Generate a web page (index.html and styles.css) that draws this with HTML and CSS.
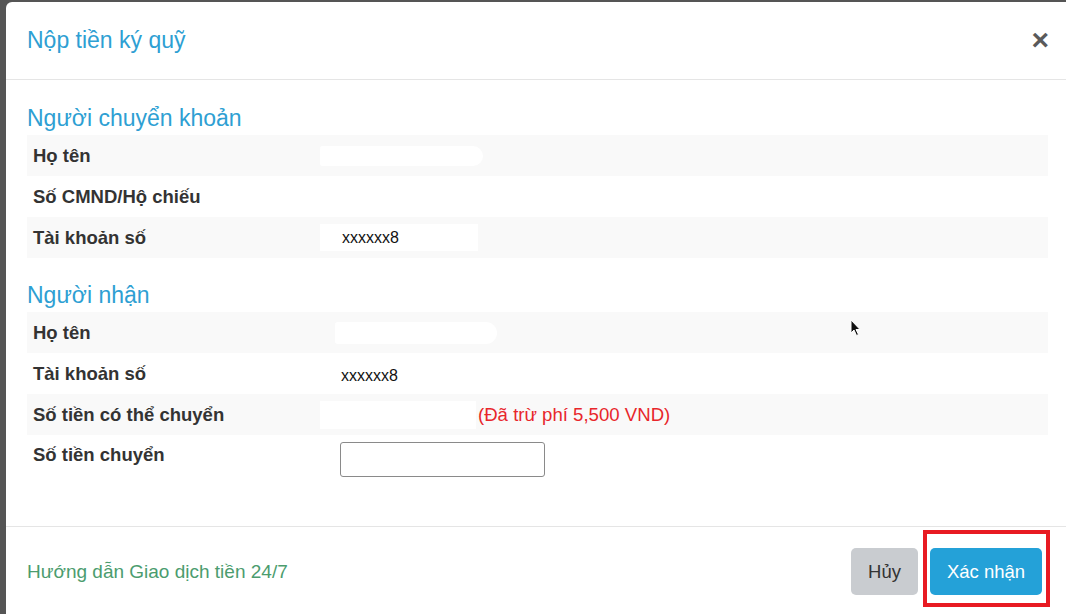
FILE: index.html
```html
<!DOCTYPE html>
<html lang="vi">
<head>
<meta charset="UTF-8">
<meta name="viewport" content="width=device-width, initial-scale=1">
<title>Nộp tiền ký quỹ</title>
<link rel="stylesheet" href="styles.css">
</head>
<body>
<div class="modal">
  <div class="modal-header">
    <h4 class="modal-title">Nộp tiền ký quỹ</h4>
    <span class="close">&times;</span>
  </div>

  <div class="modal-body">
    <!-- Sender -->
    <h3 class="section-title">Người chuyển khoản</h3>
    <table class="info-table">
      <tr>
        <th>Họ tên</th>
        <td><span class="mask mask-name"></span></td>
      </tr>
      <tr>
        <th>Số CMND/Hộ chiếu</th>
        <td></td>
      </tr>
      <tr>
        <th>Tài khoản số</th>
        <td><span class="mask mask-box">xxxxxx8</span></td>
      </tr>
    </table>

    <!-- Receiver -->
    <h3 class="section-title">Người nhận</h3>
    <table class="info-table">
      <tr>
        <th>Họ tên</th>
        <td><span class="mask mask-name2"></span></td>
      </tr>
      <tr>
        <th>Tài khoản số</th>
        <td><span class="value">xxxxxx8</span></td>
      </tr>
      <tr>
        <th>Số tiền có thể chuyển</th>
        <td><span class="mask mask-amount"></span><span class="fee">(Đã trừ phí 5,500 VND)</span></td>
      </tr>
      <tr class="input-row">
        <th>Số tiền chuyển</th>
        <td><input type="text" class="amount-input"></td>
      </tr>
    </table>

    <svg class="cursor" width="12" height="18" viewBox="0 0 12 18">
      <path d="M1 1 L1 14 L4 11 L6.5 16.5 L8.5 15.5 L6 10.5 L10 10.5 Z" fill="#111" stroke="#fff" stroke-width="1"/>
    </svg>
  </div>

  <div class="modal-footer">
    <a class="guide-link">Hướng dẫn Giao dịch tiền 24/7</a>
    <div class="buttons">
      <button type="button" class="btn btn-cancel">Hủy</button>
      <button type="button" class="btn btn-confirm">Xác nhận</button>
    </div>
    <div class="highlight"></div>
  </div>
</div>
</body>
</html>
```

FILE: styles.css
```css
html, body {
  margin: 0;
  padding: 0;
  height: 100%;
  overflow: hidden;
}
body {
  font-family: "Liberation Sans", Arial, sans-serif;
  background: #555;
  padding: 2px 0 0 6px;
  color: #333;
}
.modal {
  width: 1063px;
  height: 640px;
  background: white;
  border-top-left-radius: 6px;
  display: flex;
  flex-direction: column;
}
.modal-header {
  height: 77px;
  border-bottom: 1px solid #e5e5e5;
  display: flex;
  align-items: center;
  justify-content: space-between;
  padding: 0 20px 0 21px;
}
.modal-title {
  margin: 0;
  font-size: 23px;
  font-weight: normal;
  color: #2e9fd3;
}
.close {
  font-size: 30px;
  font-weight: bold;
  color: #5a5a5a;
  line-height: 1;
  margin-top: -2px;
}
.modal-body {
  position: relative;
  height: 446px;
  padding: 26px 21px 0 21px;
  box-sizing: border-box;
}
.section-title {
  margin: 0 0 5px;
  font-size: 23px;
  line-height: 24px;
  font-weight: normal;
  color: #2e9fd3;
}
.info-table {
  width: 100%;
  border-collapse: collapse;
  margin-bottom: 25px;
}
.info-table tr:nth-child(odd) {
  background: #f9f9f9;
}
.info-table th {
  width: 287px;
  height: 41px;
  padding: 0 0 0 6px;
  text-align: left;
  font-size: 18.5px;
  font-weight: bold;
  color: #333;
}
.info-table td {
  padding: 0;
  font-size: 16px;
  color: #111;
}
.input-row th {
  vertical-align: top;
  padding-top: 9px;
  height: 41px;
}
.input-row td {
  padding: 7px 0 8px;
}
.mask {
  display: inline-block;
  vertical-align: middle;
  background: white;
}
.mask-name {
  width: 163px;
  height: 20px;
  border-radius: 10px 40px 40px 10px;
}
.mask-name2 {
  width: 162px;
  height: 22px;
  margin-left: 15px;
  border-radius: 3px 12px 12px 3px;
}
.mask-box {
  width: 136px;
  height: 27px;
  line-height: 27px;
  padding-left: 22px;
}
.mask-amount {
  width: 156px;
  height: 28px;
}
.value {
  margin-left: 21px;
  position: relative;
  top: 2px;
}
.fee {
  margin-left: 2px;
  font-size: 18.6px;
  color: #e8262b;
  vertical-align: middle;
}
.amount-input {
  width: 205px;
  height: 35px;
  margin-left: 20px;
  box-sizing: border-box;
  border: 1.5px solid #8a8a8a;
  border-radius: 3px;
  display: block;
}
.cursor {
  position: absolute;
  left: 844px;
  top: 239px;
}
.modal-footer {
  position: relative;
  border-top: 1px solid #e5e5e5;
  display: flex;
  align-items: flex-start;
  justify-content: space-between;
  padding: 21px 27px 0 21px;
}
.guide-link {
  font-size: 19px;
  color: #4b9c6e;
  line-height: 47px;
}
.buttons {
  display: flex;
  gap: 12px;
}
.btn {
  height: 47px;
  border: none;
  border-radius: 5px;
  font-family: inherit;
  font-size: 18.5px;
  cursor: pointer;
}
.btn-cancel {
  width: 67px;
  background: #c9ccd0;
  color: #333;
}
.btn-confirm {
  width: 112px;
  background: #24a1d8;
  color: white;
}
.highlight {
  position: absolute;
  left: 917px;
  top: 3px;
  width: 119px;
  height: 69px;
  border: 4px solid #e81a22;
}
```
